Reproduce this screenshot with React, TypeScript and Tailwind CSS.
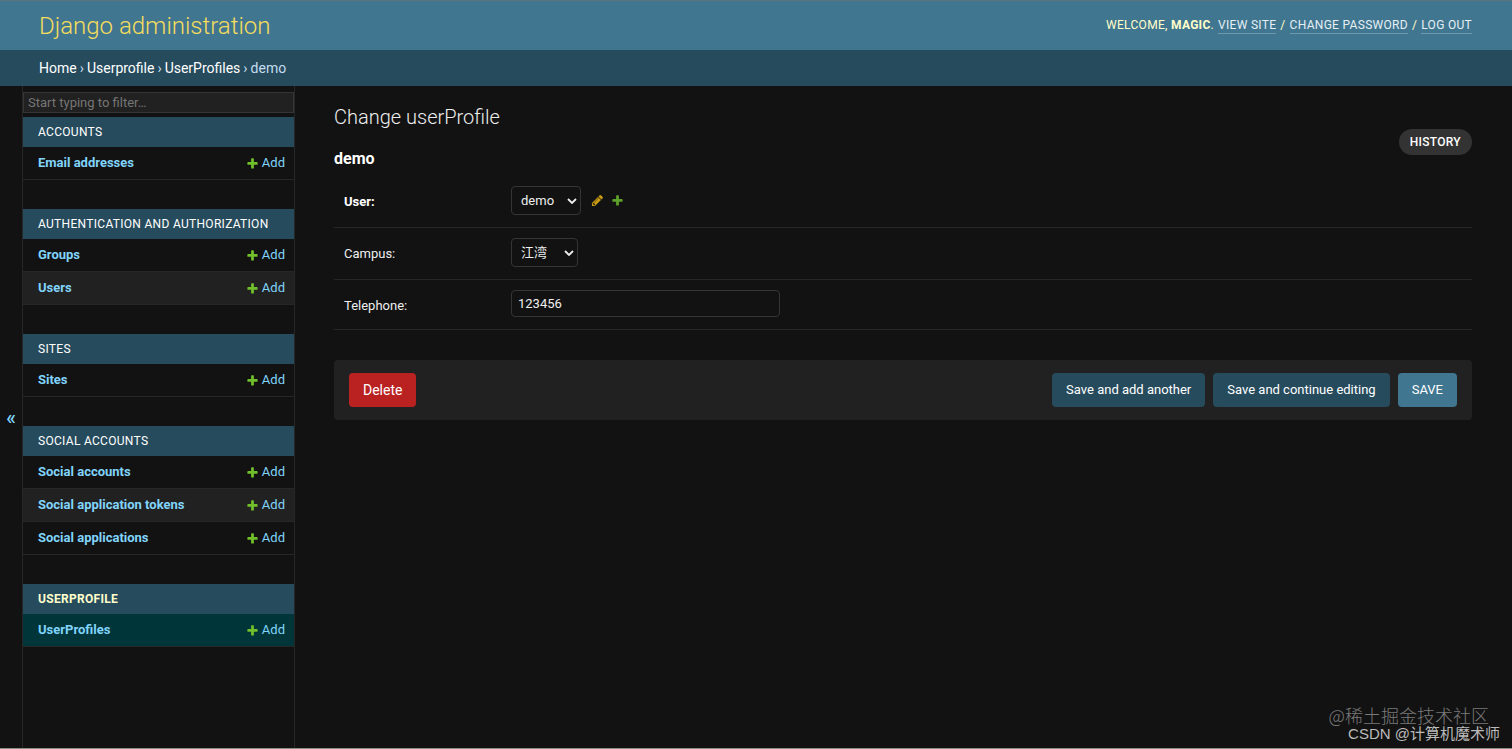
import React from "react";

type AppModule = { name: string; models: string[]; current?: boolean };

const modules: AppModule[] = [
  { name: "Accounts", models: ["Email addresses"] },
  { name: "Authentication and Authorization", models: ["Groups", "Users"] },
  { name: "Sites", models: ["Sites"] },
  {
    name: "Social Accounts",
    models: ["Social accounts", "Social application tokens", "Social applications"],
  },
  { name: "Userprofile", models: ["UserProfiles"], current: true },
];

function PlusIcon({ className }: { className: string }) {
  return (
    <svg viewBox="0 0 1792 1792" className={className} fill="currentColor" aria-hidden="true">
      <path d="M1600 796v192q0 40-28 68t-68 28h-416v416q0 40-28 68t-68 28h-192q-40 0-68-28t-28-68v-416h-416q-40 0-68-28t-28-68v-192q0-40 28-68t68-28h416v-416q0-40 28-68t68-28h192q40 0 68 28t28 68v416h416q40 0 68 28t28 68z" />
    </svg>
  );
}

function PencilIcon({ className }: { className: string }) {
  return (
    <svg viewBox="0 0 1792 1792" className={className} fill="currentColor" aria-hidden="true">
      <path d="M491 1536l91-91-235-235-91 91v107h128v128h107zm523-928q0-22-22-22-10 0-17 7l-542 542q-7 7-7 17 0 22 22 22 10 0 17-7l542-542q7-7 7-17zm-54-192l416 416-832 832h-416v-416zm683 96q0 53-37 90l-166 166-416-416 166-165q36-38 90-38 53 0 91 38l235 234q37 39 37 91z" />
    </svg>
  );
}

function Header() {
  return (
    <header className="flex h-[50px] items-center justify-between border-t border-[#5c7480] bg-[#417690] pr-10 pl-[39px] text-[#ffffcc]">
      <h1 className="text-2xl font-light text-[#f5dd5d]">
        <a href="#">Django administration</a>
      </h1>
      <div className="flex gap-1 text-xs leading-4 tracking-wide uppercase">
        <span>
          Welcome, <strong className="font-bold">magic</strong>.
        </span>
        <a href="#" className="border-b border-white/25 text-[#e4f0f5]">View site</a>
        <span>/</span>
        <a href="#" className="border-b border-white/25 text-[#e4f0f5]">Change password</a>
        <span>/</span>
        <a href="#" className="border-b border-white/25 text-[#e4f0f5]">Log out</a>
      </div>
    </header>
  );
}

function Breadcrumbs() {
  return (
    <nav aria-label="Breadcrumbs" className="flex h-9 items-center gap-[3px] bg-[#264b5d] pr-10 pl-[39px] text-sm text-[#c4dcf0]">
      <a href="#" className="text-white">Home</a>
      <span>›</span>
      <a href="#" className="text-white">Userprofile</a>
      <span>›</span>
      <a href="#" className="text-white">UserProfiles</a>
      <span>›</span>
      <span>demo</span>
    </nav>
  );
}

function Module({ name, models, current }: AppModule) {
  return (
    <table className="mb-[29px] w-full border-separate border-spacing-0 text-[13px] leading-4 text-[#81d4fa]">
      <caption
        className={
          current
            ? "h-[30px] bg-[#264b5d] px-[15px] py-[7px] text-left text-xs leading-4 font-bold tracking-wide text-[#ffffcc] uppercase"
            : "h-[30px] bg-[#264b5d] px-[15px] py-[7px] text-left text-xs leading-4 tracking-wide text-white uppercase"
        }
      >
        <a href="#">{name}</a>
      </caption>
      <tbody>
        {models.map((model) => (
          <tr key={model} className={current ? "bg-[#00363a]" : "even:bg-[#212121]"}>
            <th scope="row" className="h-[33px] border-b border-[#272727] pl-[15px] text-left font-bold">
              <a href="#">{model}</a>
            </th>
            <td className="border-b border-[#272727] pr-[9px]">
              <a href="#" className="flex items-center justify-end gap-[3px]">
                <PlusIcon className="size-[13px] text-[#70bf2b]" />
                Add
              </a>
            </td>
          </tr>
        ))}
      </tbody>
    </table>
  );
}

function Sidebar() {
  return (
    <>
      <button
        type="button"
        aria-label="Toggle navigation"
        className="flex w-[22px] shrink-0 items-center justify-center text-xl font-medium text-[#81d4fa]"
      >
        «
      </button>
      <nav aria-label="Applications" className="w-[273px] shrink-0 border-x border-[#272727] pt-1.5">
        <input
          type="search"
          aria-label="Filter navigation items"
          placeholder="Start typing to filter…"
          className="mb-1 block h-[21px] w-full border border-[#353535] bg-[#212121] px-1 pb-px text-[13px] outline-none placeholder:text-[#757575]"
        />
        {modules.map((module) => (
          <Module key={module.name} {...module} />
        ))}
      </nav>
    </>
  );
}

function Select({ id, options, width }: { id: string; options: string[]; width: string }) {
  return (
    <div className={`grid items-center ${width}`}>
      <select
        id={id}
        className="col-start-1 row-start-1 h-[29px] w-full appearance-none rounded border border-[#353535] bg-[#121212] pl-[9px] text-[13px] text-[#eeeeee]"
      >
        {options.map((option) => (
          <option key={option}>{option}</option>
        ))}
      </select>
      <svg
        viewBox="0 0 10 6"
        className="pointer-events-none col-start-1 row-start-1 mr-1 h-1.5 w-2.5 justify-self-end"
        fill="none"
        stroke="#eeeeee"
        strokeWidth="1.8"
        aria-hidden="true"
      >
        <path d="M1 1l4 4 4-4" />
      </svg>
    </div>
  );
}

function FormRow({ id, label, required, children }: { id: string; label: string; required?: boolean; children: React.ReactNode }) {
  return (
    <div className="flex border-b border-[#272727] px-2.5 pt-2.5 pb-3">
      <label
        htmlFor={id}
        className={required ? "w-[167px] pt-2 text-[13px] leading-4 font-bold text-white" : "w-[167px] pt-2 text-[13px] leading-4 text-[#eeeeee]"}
      >
        {label}
      </label>
      {children}
    </div>
  );
}

function Content() {
  return (
    <main className="min-w-0 flex-1 pt-5 pr-10 pl-[39px]">
      <h2 className="text-xl leading-[23px] font-light text-[#eeeeee]">Change userProfile</h2>
      <div className="flex items-start justify-between">
        <h3 className="pt-5 text-base leading-5 font-bold text-white">demo</h3>
        <a href="#" className="rounded-full bg-[#333333] px-[11px] py-[5px] text-xs leading-4 font-medium tracking-wide text-white uppercase">
          History
        </a>
      </div>
      <form onSubmit={(event) => event.preventDefault()}>
        <div className="pt-[7px]">
          <FormRow id="user" label="User:" required>
            <div className="flex items-center">
              <Select id="user" options={["demo"]} width="w-[70px]" />
              <a href="#" aria-label="Change selected user" className="ml-2.5">
                <PencilIcon className="size-[13px] text-[#c99a12]" />
              </a>
              <a href="#" aria-label="Add another user" className="ml-[7px]">
                <PlusIcon className="size-[13px] text-[#5da12b]" />
              </a>
            </div>
          </FormRow>
          <FormRow id="campus" label="Campus:">
            <Select id="campus" options={["江湾"]} width="w-[67px]" />
          </FormRow>
          <FormRow id="telephone" label="Telephone:">
            <input
              id="telephone"
              type="text"
              defaultValue="123456"
              className="h-[27px] w-[269px] rounded border border-[#353535] bg-[#121212] px-1.5 text-[13px] text-[#eeeeee] outline-none"
            />
          </FormRow>
        </div>
        <div className="mt-[30px] flex gap-2 rounded bg-[#212121] px-[15px] py-[13px] text-[13px] text-white">
          <button type="button" className="mr-auto h-[34px] rounded bg-[#ba2121] px-3.5 text-sm">Delete</button>
          <button type="submit" className="h-[34px] rounded bg-[#264b5d] px-3.5">Save and add another</button>
          <button type="submit" className="h-[34px] rounded bg-[#264b5d] px-3.5">Save and continue editing</button>
          <button type="submit" className="h-[34px] rounded bg-[#417690] px-3.5">SAVE</button>
        </div>
      </form>
    </main>
  );
}

export default function App() {
  return (
    <div className="relative flex min-h-screen flex-col border-b border-[#8c8c88] bg-[#121212] font-[Roboto,'Noto_Sans_CJK_SC',sans-serif]">
      <Header />
      <Breadcrumbs />
      <div className="flex flex-1">
        <Sidebar />
        <Content />
      </div>
      <div className="pointer-events-none absolute right-3 bottom-[5px] flex flex-col items-end font-['Noto_Sans_CJK_SC',sans-serif]">
        <span className="mr-[11px] text-lg leading-[18px] font-light text-[#7a7a7a]">@稀土掘金技术社区</span>
        <span className="text-[15px] leading-[18px] text-[#bbbbbb]">
          <span className="font-['Liberation_Sans',sans-serif]">CSDN @</span>计算机魔术师
        </span>
      </div>
    </div>
  );
}
